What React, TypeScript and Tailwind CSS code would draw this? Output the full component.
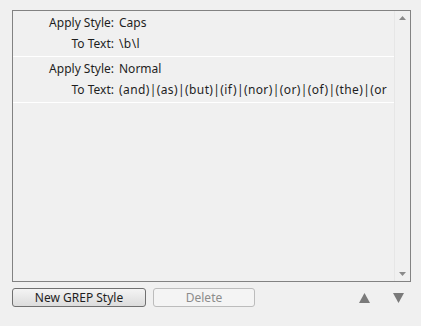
import React from 'react';

const rows = [
  { style: 'Caps', text: '\\b\\l' },
  { style: 'Normal', text: '(and)|(as)|(but)|(if)|(nor)|(or)|(of)|(the)|(or' },
];

function Row({ style, text }: { style: string; text: string }) {
  return (
    <div className="pt-[1px] pb-[2px] border-b border-white">
      <div className="flex h-[21px] items-center">
        <span className="w-[101px] shrink-0 text-right">Apply Style:</span>
        <span className="pl-[5px] whitespace-nowrap">{style}</span>
      </div>
      <div className="flex h-[21px] items-center">
        <span className="w-[101px] shrink-0 text-right">To Text:</span>
        <span className="pl-[5px] whitespace-nowrap tracking-[0.4px]">{text}</span>
      </div>
    </div>
  );
}

export default function App() {
  return (
    <div
      className="w-[421px] h-[326px] bg-[#f0f0f0] text-[12px] text-[#1e1e1e] pt-[10px] pl-[12px]"
      style={{ fontFamily: '"Noto Sans", "Open Sans", sans-serif' }}
    >
      {/* List box */}
      <div className="w-[399px] h-[272px] border border-[#828282] flex">
        <div className="flex-1 min-w-0">
          {rows.map((r) => (
            <Row key={r.style} {...r} />
          ))}
        </div>
        {/* Scrollbar */}
        <div className="w-[16px] border-l border-[#e6e6e6] flex flex-col justify-between items-center py-[5px]">
          <svg width="7" height="4" viewBox="0 0 7 4">
            <polygon points="3.5,0 7,4 0,4" fill="#8a8a8a" />
          </svg>
          <svg width="7" height="4" viewBox="0 0 7 4">
            <polygon points="0,0 7,0 3.5,4" fill="#8a8a8a" />
          </svg>
        </div>
      </div>

      {/* Bottom buttons */}
      <div className="flex items-center mt-[6px]">
        <button className="w-[134px] h-[19px] border border-[#707070] rounded-[3px] bg-gradient-to-b from-[#f4f4f4] to-[#dcdcdc] text-[12px] leading-none text-[#1e1e1e]">
          New GREP Style
        </button>
        <button
          disabled
          className="ml-[7px] w-[102px] h-[19px] border border-[#bcbcbc] rounded-[3px] bg-[#f4f4f4] text-[12px] leading-none text-[#8c8c8c]"
        >
          Delete
        </button>
        <div className="ml-auto mr-[17px] flex items-center gap-[23px]">
          <svg width="11" height="10" viewBox="0 0 11 10">
            <polygon points="5.5,0 11,10 0,10" fill="#7a7a7a" />
          </svg>
          <svg width="11" height="10" viewBox="0 0 11 10">
            <polygon points="0,0 11,0 5.5,10" fill="#7a7a7a" />
          </svg>
        </div>
      </div>
    </div>
  );
}
